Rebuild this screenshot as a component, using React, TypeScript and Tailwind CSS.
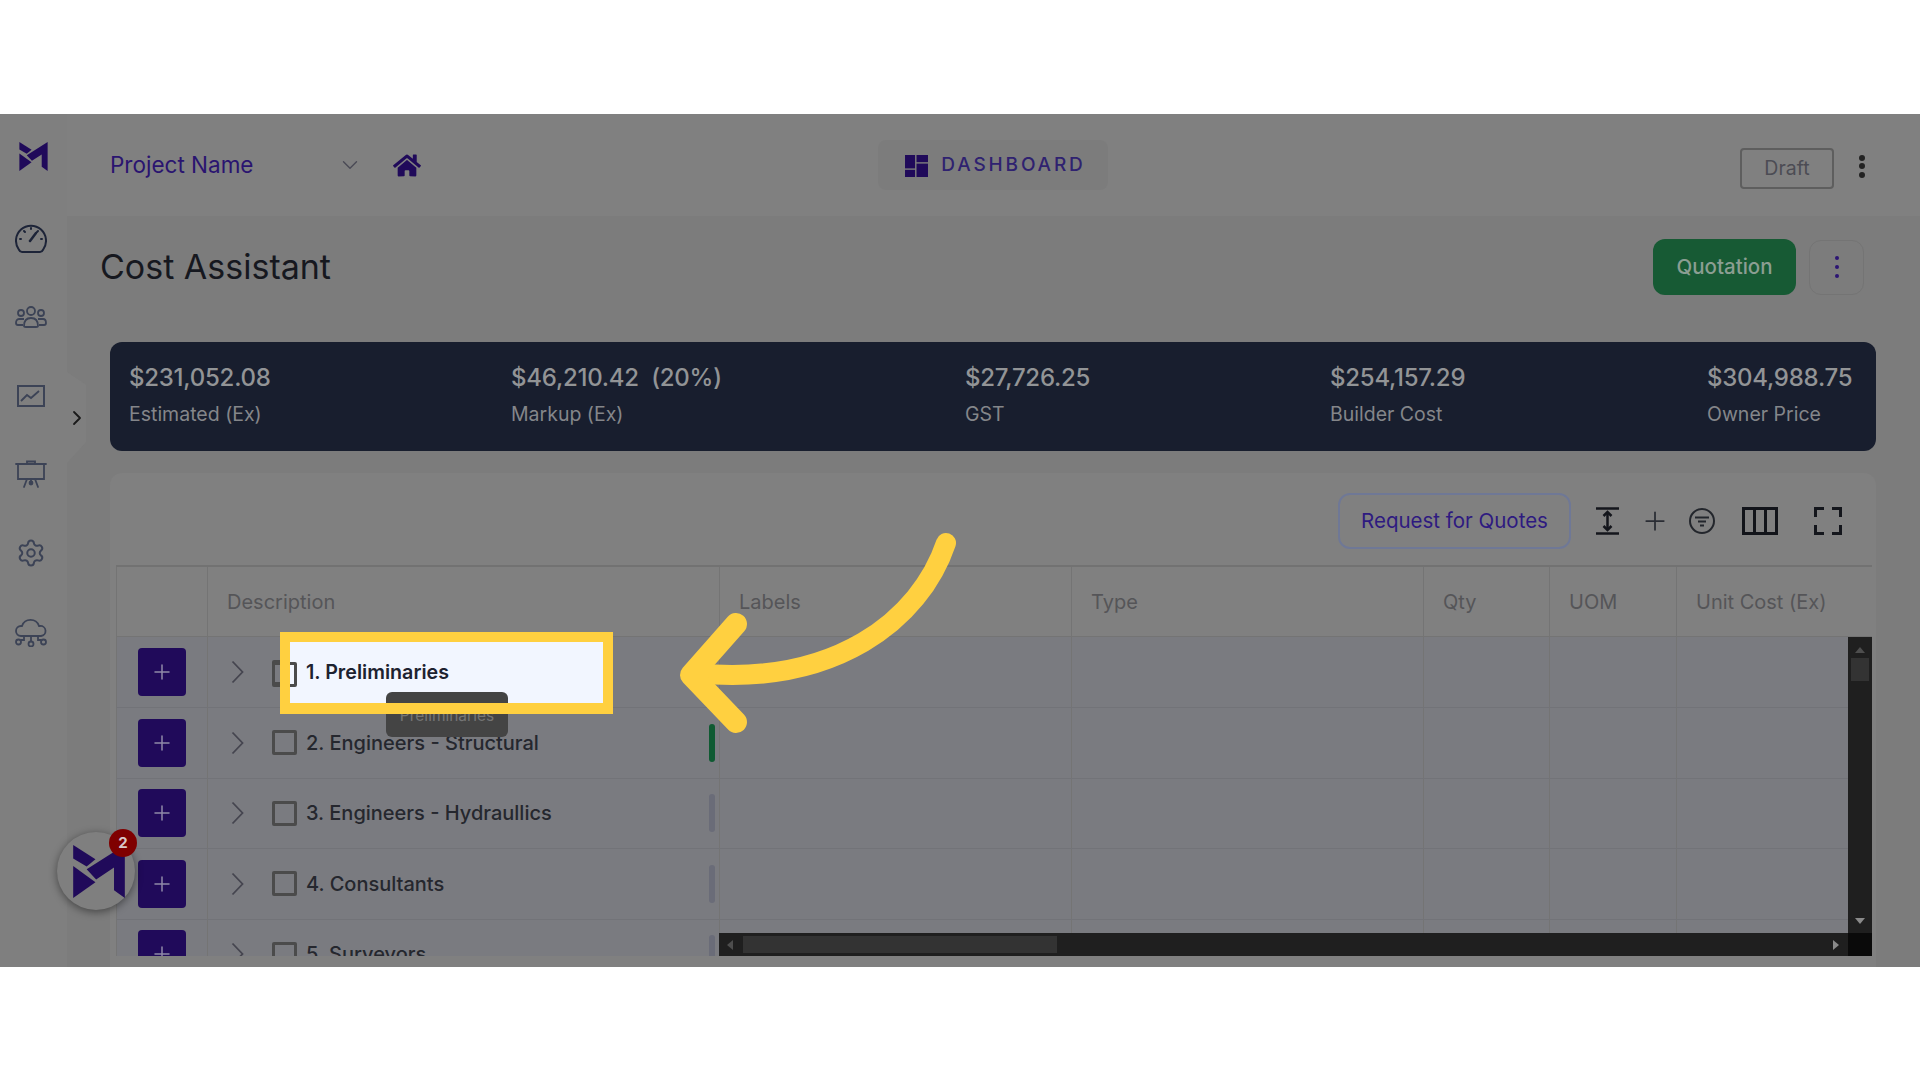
import { ChevronDown, ChevronRight, Plus, Settings } from "lucide-react";

const FONT = "font-['Inter','Liberation_Sans',sans-serif]";

const COLUMNS = [
  { label: "", width: "w-[91px]" },
  { label: "Description", width: "w-[512px]" },
  { label: "Labels", width: "w-[352px]" },
  { label: "Type", width: "w-[352px]" },
  { label: "Qty", width: "w-[126px]" },
  { label: "UOM", width: "w-[127px]" },
  { label: "Unit Cost (Ex)", width: "w-[196px]" },
];

const ROWS = [
  { name: "1. Preliminaries", bar: "" },
  { name: "2. Engineers - Structural", bar: "bg-[#0f5a32]" },
  { name: "3. Engineers - Hydraullics", bar: "bg-[#6a6c78]" },
  { name: "4. Consultants", bar: "bg-[#6a6c78]" },
  { name: "5. Surveyors", bar: "bg-[#6a6c78]" },
];

const STATS = [
  { value: "$231,052.08", label: "Estimated (Ex)", width: "w-[382px]" },
  { value: "$46,210.42  (20%)", label: "Markup (Ex)", width: "w-[454px]" },
  { value: "$27,726.25", label: "GST", width: "w-[365px]" },
  { value: "$254,157.29", label: "Builder Cost", width: "w-[377px]" },
  { value: "$304,988.75", label: "Owner Price", width: "" },
];

function Logo({ className }: { className: string }) {
  return (
    <svg viewBox="42 58 153 157" className={className} fill="#200a5a">
      <polygon points="42,58 108,100 82,122 42,98" />
      <polygon points="42,120 108,168 42,215" />
      <polygon points="82,130 195,58 195,215 163,192 163,125 110,160" />
    </svg>
  );
}

function Gauge() {
  return (
    <svg viewBox="0 0 32 30" className="h-[30px] w-[32px]" fill="none" stroke="#1d2438" strokeWidth="2" strokeLinecap="round">
      <path d="M7 29h18c1.500 0 2.500-1 3.200-2.500A15 15 0 1 0 3.800 26.500C4.500 28 5.500 29 7 29Z" />
      <path d="M15 18l6-8" strokeWidth="2.500" />
      <path d="M16 5v1M9 8l1 1M23 8l-1 1M5 16h1M27 16h-1" />
    </svg>
  );
}

function People() {
  return (
    <svg viewBox="0 0 32 22" className="h-[22px] w-[32px]" fill="none" stroke="#3c4356" strokeWidth="1.800">
      <circle cx="16" cy="5" r="4" />
      <circle cx="6" cy="7" r="3" />
      <circle cx="26" cy="7" r="3" />
      <path d="M9 20c0-6 3-8 7-8s7 2 7 8c0 1-1 1-2 1H11c-1 0-2 0-2-1Z" />
      <path d="M9 13H4c-2 0-3 2-3 4 0 1 1 2 2 2h5M23 13h5c2 0 3 2 3 4 0 1-1 2-2 2h-5" />
    </svg>
  );
}

function ChartBox() {
  return (
    <svg viewBox="0 0 28 22" className="h-[22px] w-[28px]" fill="none" stroke="#3c4356" strokeWidth="2">
      <rect x="1" y="1" width="26" height="20" />
      <path d="M4 16l6-6 4 3 8-7" strokeWidth="1.800" />
    </svg>
  );
}

function Easel() {
  return (
    <svg viewBox="0 0 32 28" className="h-[28px] w-[32px]" fill="none" stroke="#3c4356" strokeWidth="1.800" strokeLinecap="round">
      <path d="M1 4h30M3 4v15h26V4" />
      <path d="M12 4V1.500h8V4" />
      <path d="M9 27l3-8M23 27l-3-8M16 19v3" />
      <circle cx="16" cy="23" r="1.500" fill="#3c4356" />
    </svg>
  );
}

function CloudNet() {
  return (
    <svg viewBox="0 0 32 30" className="h-[30px] w-[32px]" fill="none" stroke="#3c4356" strokeWidth="1.800">
      <path d="M6 19a5 5 0 0 1 0-10h1a9 9 0 0 1 17 0h1a5 5 0 0 1 1 10Z" />
      <path d="M16 19v5M9 19v4H6M23 19v4h3" />
      <circle cx="3.500" cy="25" r="2.500" />
      <circle cx="16" cy="27" r="2.500" />
      <circle cx="28.500" cy="25" r="2.500" />
    </svg>
  );
}

function RowChevron() {
  return (
    <svg viewBox="0 0 13 24" className="h-[24px] w-[13px]" fill="none" stroke="#45454f" strokeWidth="1.800">
      <path d="M1.500 1.500 11.500 12 1.500 22.500" />
    </svg>
  );
}

function Sidebar() {
  return (
    <div className="flex w-[67px] shrink-0 flex-col items-center bg-[#7f7f7f] pr-[5px] pt-[28px]">
      <Logo className="ml-[4px] h-[29px] w-[31px]" />
      <div className="mt-[52px] flex h-[30px] items-center"><Gauge /></div>
      <div className="mt-[49px] flex h-[30px] items-center"><People /></div>
      <div className="mt-[49px] flex h-[30px] items-center"><ChartBox /></div>
      <div className="mt-[48px] flex h-[30px] items-center"><Easel /></div>
      <div className="mt-[49px] flex h-[30px] items-center">
        <Settings size={30} strokeWidth={1.6} color="#3c4356" />
      </div>
      <div className="mt-[49px] flex h-[30px] items-center"><CloudNet /></div>
    </div>
  );
}

function Header() {
  return (
    <div className="flex h-[102px] shrink-0 items-center bg-[#808080] pl-[43px] pr-[55px]">
      <div className="flex w-[253px] items-center justify-between">
        <span className="text-[22.5px] text-[#2a1470]">Project Name</span>
        <ChevronDown size={26} strokeWidth={1.3} color="#4a4a55" />
      </div>
      <svg viewBox="0 0 576 512" className="ml-[30px] h-[25px] w-[28px]" fill="#200a5a">
        <path d="M280 148 96 300v164c0 9 7 16 16 16l112-1c9 0 16-7 16-16v-95c0-9 7-16 16-16h64c9 0 16 7 16 16v95c0 9 7 16 16 16l112 1c9 0 16-7 16-16V300L296 148c-4-4-12-4-16 0Zm291 103-83-69V44c0-7-5-12-12-12h-56c-7 0-12 5-12 12v73l-90-74c-18-15-44-15-61 0L5 251c-5 4-6 12-2 17l26 31c4 5 12 6 17 2L280 108c4-4 12-4 16 0l234 193c5 4 13 3 17-2l26-31c4-5 3-13-2-17Z" />
      </svg>
      <div className="ml-[457px] flex h-[50px] w-[230px] items-center justify-center gap-[13px] rounded-[8px] bg-[#7c7c7c] pl-[5px] pt-[1px]">
        <svg viewBox="0 0 24 23" className="h-[22px] w-[23px]" fill="#200a5a">
          <rect x="0" y="0" width="10.500" height="14" />
          <rect x="0" y="15.500" width="10.500" height="7.500" />
          <rect x="12" y="0" width="12" height="7.500" />
          <rect x="12" y="9" width="12" height="14" />
        </svg>
        <span className="text-[19px] font-medium tracking-[0.15em] text-[#2f2270]">DASHBOARD</span>
      </div>
      <div className="ml-auto mt-[7px] flex h-[41px] w-[94px] items-center justify-center rounded-[4px] border-2 border-[#5e5e5e] text-[19.5px] text-[#4c4c54]">
        Draft
      </div>
      <div className="ml-[25px] mt-[2px] flex flex-col gap-[2.500px]">
        <span className="h-[6px] w-[6px] rounded-full bg-[#222]" />
        <span className="h-[6px] w-[6px] rounded-full bg-[#222]" />
        <span className="h-[6px] w-[6px] rounded-full bg-[#222]" />
      </div>
    </div>
  );
}

function ToolbarIcons() {
  return (
    <div className="ml-[25px] flex items-center">
      <svg viewBox="0 0 23 28" className="h-[28px] w-[23px]" fill="none" stroke="#14161c" strokeWidth="2.500">
        <path d="M0 1.500h23M0 26.500h23M11.500 6v16" />
        <path d="M7.500 9l4-4 4 4M7.500 19l4 4 4-4" />
      </svg>
      <Plus size={30} strokeWidth={1.4} color="#2a2d34" className="ml-[21px]" />
      <svg viewBox="0 0 26 26" className="ml-[19px] h-[26px] w-[26px]" fill="none" stroke="#23262c" strokeWidth="2">
        <circle cx="13" cy="13" r="12" />
        <path d="M6 9.500h14M9 13.500h8M11 17.500h4" />
      </svg>
      <svg viewBox="0 0 36 28" className="ml-[27px] h-[28px] w-[36px]" fill="none" stroke="#12141a" strokeWidth="3">
        <path d="M1.500 1.500h33v25h-33ZM12.500 1.500v25M23.500 1.500v25" />
      </svg>
      <svg viewBox="0 0 28 28" className="ml-[36px] h-[28px] w-[28px]" fill="none" stroke="#14161c" strokeWidth="3">
        <path d="M1.500 10V1.500H10M18 1.500h8.500V10M26.500 18v8.500H18M10 26.500H1.500V18" />
      </svg>
    </div>
  );
}

function CostTable() {
  return (
    <div className="relative h-[391px] w-[1756px] overflow-hidden border-t-2 border-[#727272]">
      {/* header */}
      <div className="flex h-[70px] border-b border-[#747474]">
        {COLUMNS.map((c, i) => (
          <div key={i} className={`${c.width} flex shrink-0 items-center border-l border-[#747474] pl-[19px] text-[20px] text-[#555558]`}>
            {c.label}
          </div>
        ))}
      </div>
      {/* rows */}
      {ROWS.map((r, i) => (
        <div key={r.name} className={`flex border-b border-[#727378] bg-[#7a7b80] ${i === 0 ? "h-[71px]" : "h-[70.500px]"}`}>
          <div className="flex w-[91px] shrink-0 items-center border-l border-[#747474] pl-[21px]">
            <div className="flex h-[48px] w-[48px] items-center justify-center rounded-[4px] bg-[#200a5a]">
              <Plus size={24} strokeWidth={1.5} color="#8f8aa8" />
            </div>
          </div>
          <div className="flex w-[512px] shrink-0 items-center border-l border-[#747474] pl-[23px]">
            <RowChevron />
            <div className="ml-[28px] h-[25px] w-[25px] rounded-[2px] border-[3px] border-[#4b4b4b]" />
            {/* the first row's label is drawn in the spotlight */}
            {i > 0 && <span className="ml-[9px] text-[20px] font-medium text-[#25272e]">{r.name}</span>}
            {r.bar && <div className={`ml-auto mr-[4px] h-[38px] w-[6px] rounded-[3px] ${r.bar}`} />}
          </div>
          <div className="w-[352px] shrink-0 border-l border-[#747474]" />
          <div className="w-[352px] shrink-0 border-l border-[#747474]" />
          <div className="w-[126px] shrink-0 border-l border-[#747474]" />
          <div className="w-[127px] shrink-0 border-l border-[#747474]" />
          <div className="w-[196px] shrink-0 border-l border-[#747474]" />
        </div>
      ))}
      {/* scrollbars lie over the grid */}
      <div className="absolute right-0 top-[70px] flex h-[297px] w-[24px] flex-col items-center bg-[#1f1f1f]">
        <span className="mt-[10px] h-0 w-0 border-x-[5px] border-b-[6px] border-x-transparent border-b-[#4e4e4e]" />
        <span className="mt-[5px] h-[23px] w-[18px] bg-[#333]" />
        <span className="mt-auto mb-[10px] h-0 w-0 border-x-[5px] border-t-[6px] border-x-transparent border-t-[#8a8a8a]" />
      </div>
      <div className="absolute bottom-0 left-[603px] right-0 flex h-[23px] items-center bg-[#1f1f1f]">
        <span className="ml-[8px] h-0 w-0 border-y-[5px] border-r-[6px] border-y-transparent border-r-[#4e4e4e]" />
        <span className="ml-[10px] h-[17px] w-[314px] bg-[#333]" />
        <span className="ml-auto mr-[33px] h-0 w-0 border-y-[5px] border-l-[6px] border-y-transparent border-l-[#8a8a8a]" />
        <span className="absolute right-0 h-[23px] w-[24px] bg-[#0a0a0a]" />
      </div>
    </div>
  );
}

export default function App() {
  return (
    <div className={`${FONT} flex h-[1080px] w-[1920px] flex-col overflow-hidden bg-white`}>
      <div className="h-[114px] shrink-0" />
      <div className="relative flex h-[853px] shrink-0 overflow-hidden bg-[#7c7c7c]">
        <Sidebar />
        <div className="flex min-w-0 flex-1 flex-col">
          <Header />
          <div className="flex h-[102px] shrink-0 items-center justify-between pl-[33px] pr-[56px]">
            <h1 className="mb-[2px] text-[34px] font-normal text-[#16181f]">Cost Assistant</h1>
            <div className="flex items-center gap-[13px]">
              <div className="flex h-[56px] w-[143px] items-center justify-center rounded-[12px] bg-[#175a34] text-[20.5px] font-medium text-[#8b9e92]">
                Quotation
              </div>
              <div className="flex h-[55px] w-[55px] flex-col items-center justify-center gap-[5px] rounded-[12px] border border-[#747474]">
                <span className="h-[4px] w-[4px] rounded-full bg-[#2c1573]" />
                <span className="h-[4px] w-[4px] rounded-full bg-[#2c1573]" />
                <span className="h-[4px] w-[4px] rounded-full bg-[#2c1573]" />
              </div>
            </div>
          </div>
          <div className="ml-[43px] mt-[24px] flex h-[109px] w-[1766px] shrink-0 items-start rounded-[12px] bg-[#181e2e] pl-[19px] pt-[19px]">
            {STATS.map((s) => (
              <div key={s.label} className={`${s.width} shrink-0`}>
                <div className="whitespace-pre text-[24px] font-medium leading-[34px] tracking-[-0.01em] text-[#929496]">{s.value}</div>
                <div className="mt-[6px] text-[19.5px] leading-[26px] text-[#84868a]">{s.label}</div>
              </div>
            ))}
          </div>
          <div className="ml-[43px] mt-[22px] w-[1766px] flex-1 rounded-t-[12px] bg-[#808080] pl-[6px] pr-[4px]">
            <div className="flex h-[92px] items-center justify-end pr-[30px] pt-[4px]">
              <div className="flex h-[56px] w-[233px] items-center justify-center rounded-[12px] border-2 border-[#6f7896] text-[20.5px] text-[#2e1a80]">
                Request for Quotes
              </div>
              <ToolbarIcons />
            </div>
            <CostTable />
          </div>
        </div>

        {/* collapse tab sticking out of the sidebar */}
        <div className="absolute left-[67px] top-[258px] flex h-[91px] w-[19px] items-center justify-center bg-[#7f7f7f] [clip-path:polygon(0_0,100%_14%,100%_77%,0_100%)]">
          <ChevronRight size={24} strokeWidth={1.8} color="#1a1a1a" className="shrink-0" />
        </div>

        {/* floating help button */}
        <div className="absolute left-[57px] top-[718px] flex h-[78px] w-[78px] items-center justify-center rounded-full bg-[#7f7f7f] shadow-[0_2px_8px_rgba(0,0,0,0.45)]">
          <Logo className="ml-[5px] h-[53px] w-[52px]" />
          <div className="absolute left-[52px] top-[-3px] flex h-[28px] w-[28px] items-center justify-center rounded-full bg-[#7f0000] text-[15px] font-bold text-[#d8c8c8]">
            2
          </div>
        </div>
      </div>

      {/* spotlight on the first row, drawn over the dimmed page */}
      <div className="absolute left-[280px] top-[632px] h-[82px] w-[333px] overflow-visible">
        <div className="absolute inset-0 bg-[#f2f6ff]" />
        <div className="absolute left-[-8px] top-[30px] h-[25px] w-[25px] rounded-[2px] border-[3px] border-[#4b4b4b]" />
        <span className="absolute left-[26px] top-[27px] text-[19.7px] font-semibold leading-[26px] text-[#1d2230]">1. Preliminaries</span>
        <div className="absolute left-[106px] top-[60px] flex h-[45px] w-[122px] items-center justify-center rounded-[6px] bg-[#444] pt-[2px] text-[15.5px] text-[#757575]">
          Preliminaries
        </div>
        <div className="absolute inset-0 border-x-[10px] border-b-[11px] border-t-[10px] border-[#ffd040]" />
      </div>

      {/* hand-drawn arrow */}
      <svg viewBox="0 0 300 220" className="absolute left-[670px] top-[525px] h-[220px] w-[300px]" fill="none" stroke="#ffd040" strokeLinecap="round" strokeLinejoin="round">
        <path d="M276 18C250 95 165 162 25 148" strokeWidth="20" />
        <path d="M66 99 21 150 66 197" strokeWidth="22" />
      </svg>
    </div>
  );
}
